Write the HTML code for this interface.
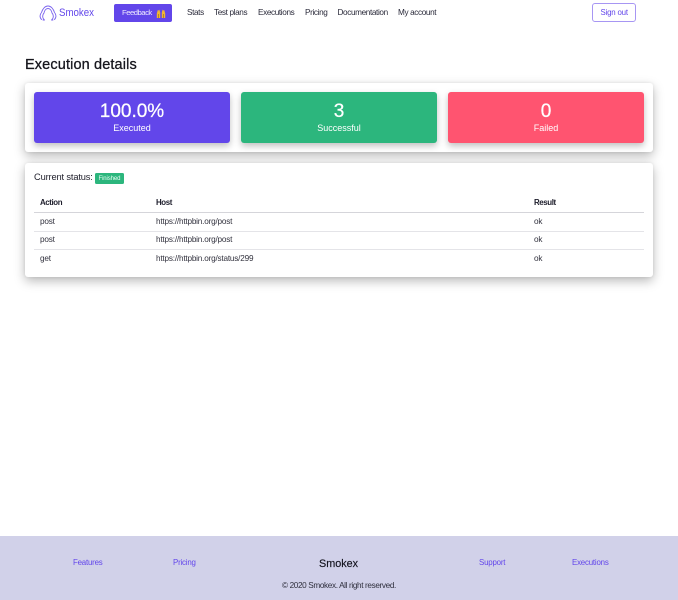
<!DOCTYPE html>
<html lang="en">
<head>
<meta charset="utf-8">
<title>Smokex</title>
<style>
html,body{margin:0;padding:0;background:#fff}
body{position:relative;width:678px;height:600px;overflow:hidden;font-family:"Liberation Sans",sans-serif;color:#1a1a2e}
.t{position:absolute;white-space:nowrap;line-height:1}
.nav{font-size:8.2px;top:9px;color:#2a2a3a;letter-spacing:-.37px}
.card{position:absolute;left:25px;width:628px;background:#fff;border-radius:3px;box-shadow:0 4px 11px rgba(0,0,0,.28),0 0 3px rgba(0,0,0,.08)}
.stat{position:absolute;top:92px;height:51px;width:196px;border-radius:3px;color:#fff;text-align:center;box-shadow:0 3px 7px rgba(0,0,0,.25)}
.stat b{position:absolute;left:0;right:0;top:10px;font-size:19px;line-height:20px;font-weight:400;-webkit-text-stroke:.25px #fff}
.stat span{position:absolute;left:0;right:0;top:31px;font-size:9px;line-height:11px}
.line{position:absolute;left:34px;width:610px;height:1px;background:#e4e4e8}
.cell{font-size:8.2px;color:#33333f;letter-spacing:-.2px}
.head{font-size:7.9px;font-weight:700;color:#1d1d2b;letter-spacing:-.4px}
.foot{position:absolute;left:0;top:536px;width:678px;height:64px;background:#d1d1e9}
.fl{font-size:7.9px;color:#6246ea;top:559px;letter-spacing:-.2px}
</style>
</head>
<body>
<svg style="position:absolute;left:38.500px;top:4.500px" width="18" height="16" viewBox="0 0 18 16" fill="none" stroke="#7a62ee" stroke-width=".9" stroke-linecap="round">
<path d="M2.500 14.500C.5 12.500.6 9.500 2.500 7.500 3.500 4 6 1 9 1s5.500 3 6.500 6.500c1.900 2 2 5 0 7"/>
<path d="M5 14.500C3 12.500 3.500 9.500 5 8 5.500 5.500 7 3.500 9 3.500S12.500 5.500 13 8c1.500 1.500 2 4.500 0 6.500"/>
<path d="M4 15h1.500M12.500 15H14"/>
</svg>
<div class="t" style="left:59px;top:7.500px;font-size:11px;color:#6246ea;transform:scaleX(.88);transform-origin:0 0">Smokex</div>

<div style="position:absolute;left:114px;top:3.500px;width:58px;height:18px;background:#6246ea;border-radius:2px"></div>
<div class="t" style="left:122px;top:9px;font-size:7.700px;color:#eee9ff;letter-spacing:-.5px">Feedback</div>
<svg style="position:absolute;left:155.500px;top:8.500px" width="10" height="9" viewBox="0 0 10 9"><path d="M.8 9V4.500L1.800 1l1 .5.500-1 .9 3V9zM5.800 9V3.500l.9-3 .5 1 1-.5 1 3.500V9z" fill="#f2b632"/><path d="M2.500 9V5M7.500 9V5" stroke="#8a6a20" stroke-width=".6"/></svg>

<div class="t nav" style="left:187px">Stats</div>
<div class="t nav" style="left:214px">Test plans</div>
<div class="t nav" style="left:258px">Executions</div>
<div class="t nav" style="left:305px">Pricing</div>
<div class="t nav" style="left:337.500px">Documentation</div>
<div class="t nav" style="left:398px">My account</div>

<div style="position:absolute;left:592px;top:3px;width:42px;height:17px;border:1px solid #a796f3;border-radius:3px"></div>
<div class="t" style="left:600.500px;top:9px;font-size:7.900px;color:#6246ea;letter-spacing:-.2px">Sign out</div>

<div class="t" style="left:25px;top:58px;font-size:14.500px;font-weight:400;color:#16161d;letter-spacing:.13px;-webkit-text-stroke:.3px #16161d">Execution details</div>

<div class="card" style="top:83px;height:69px"></div>
<div class="stat" style="left:34px;background:#6246ea"><b>100.0%</b><span>Executed</span></div>
<div class="stat" style="left:241px;background:#2cb67d"><b>3</b><span>Successful</span></div>
<div class="stat" style="left:448px;background:#ff5470"><b>0</b><span>Failed</span></div>

<div class="card" style="top:163px;height:114px"></div>
<div class="t" style="left:34px;top:173px;font-size:9.300px;color:#22222e;letter-spacing:-.15px">Current status:</div>
<div style="position:absolute;left:94.500px;top:172.500px;width:29px;height:11px;background:#2cb67d;border-radius:1.500px"></div>
<div class="t" style="left:98.500px;top:175.500px;font-size:6px;color:#eafff5;letter-spacing:-.1px">Finished</div>

<div class="t head" style="left:40px;top:199px">Action</div>
<div class="t head" style="left:156px;top:199px">Host</div>
<div class="t head" style="left:534px;top:199px">Result</div>
<div class="line" style="top:212px;background:#d5d5da"></div>
<div class="t cell" style="left:40px;top:218px">post</div>
<div class="t cell" style="left:156px;top:218px">https://httpbin.org/post</div>
<div class="t cell" style="left:534px;top:218px">ok</div>
<div class="line" style="top:231px"></div>
<div class="t cell" style="left:40px;top:236px">post</div>
<div class="t cell" style="left:156px;top:236px">https://httpbin.org/post</div>
<div class="t cell" style="left:534px;top:236px">ok</div>
<div class="line" style="top:249px"></div>
<div class="t cell" style="left:40px;top:254.500px">get</div>
<div class="t cell" style="left:156px;top:254.500px">https://httpbin.org/status/299</div>
<div class="t cell" style="left:534px;top:254.500px">ok</div>

<div class="foot"></div>
<div class="t fl" style="left:73px">Features</div>
<div class="t fl" style="left:173px">Pricing</div>
<div class="t" style="left:319px;top:558.500px;font-size:10.800px;color:#12121c;-webkit-text-stroke:.15px #12121c">Smokex</div>
<div class="t fl" style="left:479px">Support</div>
<div class="t fl" style="left:572px">Executions</div>
<div class="t" style="left:282px;top:581.500px;font-size:8.200px;color:#2f2f3d;letter-spacing:-.36px">© 2020 Smokex. All right reserved.</div>
</body>
</html>
